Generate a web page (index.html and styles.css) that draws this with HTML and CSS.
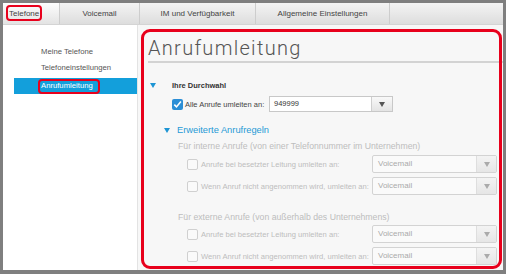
FILE: index.html
```html
<!DOCTYPE html>
<html lang="de">
<head>
<meta charset="utf-8">
<title>Anrufumleitung</title>
<link rel="stylesheet" href="styles.css">
</head>
<body>
<div class="frame">
  <div class="window">
    <nav class="tabs">
      <div class="tab tab-active">Telefone</div>
      <div class="tab tab-vm">Voicemail</div>
      <div class="tab tab-im">IM und Verfügbarkeit</div>
      <div class="tab tab-gen">Allgemeine Einstellungen</div>
      <div class="tab-fill"></div>
    </nav>
    <div class="main">
      <aside class="sidebar">
        <div class="nav-item">Meine Telefone</div>
        <div class="nav-item">Telefoneinstellungen</div>
        <div class="nav-item selected">Anrufumleitung</div>
      </aside>
      <section class="content">
        <h1 class="title">Anrufumleitung</h1>
        <div class="sec-head">
          <svg class="tri" width="6" height="5" viewBox="0 0 6 5"><path d="M0 0H6L3 5Z" fill="#1e95d4"/></svg>
          <span class="sec-text">Ihre Durchwahl</span>
        </div>
        <div class="fwd-row">
          <span class="cb cb-on"><svg width="11" height="11" viewBox="0 0 11 11"><path d="M2.3 5.6L4.5 7.9L8.9 2.6" fill="none" stroke="#fff" stroke-width="1.6"/></svg></span>
          <span class="fwd-lbl">Alle Anrufe umleiten an:</span>
          <div class="combo">
            <span class="combo-val">949999</span>
            <span class="combo-btn"><svg width="6" height="5" viewBox="0 0 6 5"><path d="M0 0H6L3 5Z" fill="#555"/></svg></span>
          </div>
        </div>
        <div class="adv-head">
          <svg class="tri" width="6" height="5" viewBox="0 0 6 5"><path d="M0 0H6L3 5Z" fill="#1e95d4"/></svg>
          <span class="adv-text">Erweiterte Anrufregeln</span>
        </div>
        <div class="group-label">Für interne Anrufe (von einer Telefonnummer im Unternehmen)</div>
        <div class="rule-row">
          <span class="cb"></span>
          <span class="rule-lbl">Anrufe bei besetzter Leitung umleiten an:</span>
          <div class="select"><span class="sel-val">Voicemail</span><span class="sel-btn"><svg width="6" height="5" viewBox="0 0 6 5"><path d="M0 0H6L3 5Z" fill="#aaa"/></svg></span></div>
        </div>
        <div class="rule-row rule-next">
          <span class="cb"></span>
          <span class="rule-lbl">Wenn Anruf nicht angenommen wird, umleiten an:</span>
          <div class="select"><span class="sel-val">Voicemail</span><span class="sel-btn"><svg width="6" height="5" viewBox="0 0 6 5"><path d="M0 0H6L3 5Z" fill="#aaa"/></svg></span></div>
        </div>
        <div class="group-label group-ext">Für externe Anrufe (von außerhalb des Unternehmens)</div>
        <div class="rule-row rule-first-ext">
          <span class="cb"></span>
          <span class="rule-lbl">Anrufe bei besetzter Leitung umleiten an:</span>
          <div class="select"><span class="sel-val">Voicemail</span><span class="sel-btn"><svg width="6" height="5" viewBox="0 0 6 5"><path d="M0 0H6L3 5Z" fill="#aaa"/></svg></span></div>
        </div>
        <div class="rule-row rule-next">
          <span class="cb"></span>
          <span class="rule-lbl">Wenn Anruf nicht angenommen wird, umleiten an:</span>
          <div class="select"><span class="sel-val">Voicemail</span><span class="sel-btn"><svg width="6" height="5" viewBox="0 0 6 5"><path d="M0 0H6L3 5Z" fill="#aaa"/></svg></span></div>
        </div>
      </section>
    </div>
    <div class="mark mark-tab"></div>
    <div class="mark mark-nav"></div>
    <div class="mark mark-main"></div>
  </div>
</div>
</body>
</html>
```
FILE: styles.css
```css
html, body {
  margin: 0;
  padding: 0;
}

.frame {
  width: 506px;
  height: 274px;
  box-sizing: border-box;
  padding: 3px 3px 4px 3px;
  background: #7f7f7f;
}

.window {
  position: relative;
  height: 267px;
  background: #fff;
  display: flex;
  flex-direction: column;
  overflow: hidden;
  font-family: "Liberation Sans", Arial, sans-serif;
  font-size: 8px;
  color: #444;
}

/* Tabs */
.tabs {
  flex: none;
  height: 22px;
  display: flex;
  box-sizing: border-box;
  border-bottom: 1px solid #d4d4d4;
}

.tab {
  display: flex;
  align-items: center;
  justify-content: center;
  box-sizing: border-box;
  color: #444;
  background: linear-gradient(#f4f4f4, #dddddd);
  border-right: 1px solid #cdcdcd;
}

.tab-active {
  width: 57px;
  justify-content: flex-start;
  padding-left: 6px;
  background: linear-gradient(#fdfdfd, #e3e3e3);
}

.tab-vm { width: 80px; }
.tab-im { width: 116px; }
.tab-gen { width: 134px; }

.tab-fill {
  flex: 1;
  background: linear-gradient(#f4f4f4, #dddddd);
}

/* Main */
.main {
  flex: 1;
  display: flex;
  min-height: 0;
}

.sidebar {
  flex: none;
  width: 135px;
  box-sizing: border-box;
  border-right: 1px solid #e3e3e3;
  padding: 19px 0 0 11px;
  background: #fff;
  font-size: 7.7px;
}

.nav-item {
  height: 16px;
  line-height: 16px;
  padding-left: 27px;
  color: #555;
}

.nav-item.selected {
  margin-top: 2px;
  background: #139fdb;
  color: #fff;
}

.content {
  flex: 1;
  background: #f7f7f7;
  display: flex;
  flex-direction: column;
}

.title {
  margin: 0 0 0 10px;
  padding: 11px 0 1px;
  line-height: 24px;
  font-family: Roboto, "Liberation Sans", sans-serif;
  font-weight: 300;
  font-size: 20px;
  letter-spacing: 1.3px;
  color: #555;
  border-bottom: 2px solid #d3d3d3;
}

.tri {
  flex: none;
  display: block;
}

.sec-head {
  margin-top: 15px;
  height: 14px;
  display: flex;
  align-items: center;
  padding-left: 12px;
}

.sec-text {
  margin-left: 16px;
  font-weight: bold;
  font-size: 7.5px;
  color: #333;
}

.fwd-row {
  margin-top: 4px;
  height: 16px;
  display: flex;
  align-items: center;
  padding-left: 34px;
  font-size: 7.5px;
  color: #444;
}

.cb {
  flex: none;
  width: 11px;
  height: 11px;
  box-sizing: border-box;
  border: 1px solid #d0d0d0;
  border-radius: 2px;
  background: #fafafa;
}

.cb-on {
  border: none;
  background: #2b8ed6;
}

.cb-on svg {
  display: block;
}

.fwd-lbl {
  margin-left: 2px;
  width: 84px;
  flex: none;
}

.combo {
  width: 124px;
  height: 16px;
  box-sizing: border-box;
  border: 1px solid #c8c8c8;
  background: #fff;
  display: flex;
  align-items: stretch;
}

.combo-val {
  flex: 1;
  padding-left: 4px;
  line-height: 14px;
  color: #333;
}

.combo-btn {
  width: 20px;
  flex: none;
  border-left: 1px solid #cfcfcf;
  background: linear-gradient(#f9f9f9, #e4e4e4);
  display: flex;
  align-items: center;
  justify-content: center;
}

.adv-head {
  margin-top: 11px;
  height: 14px;
  display: flex;
  align-items: center;
  padding-left: 26px;
}

.adv-text {
  margin-left: 7px;
  font-size: 9.3px;
  color: #1f9ad6;
}

.group-label {
  margin-top: 3px;
  height: 12px;
  line-height: 12px;
  padding-left: 40px;
  font-size: 8.7px;
  color: #bdbdbd;
}

.group-ext {
  margin-top: 16px;
}

.rule-row {
  margin-top: 3px;
  height: 18px;
  display: flex;
  align-items: center;
  padding-left: 49px;
  font-size: 7.6px;
  color: #bdbdbd;
}

.rule-next {
  margin-top: 4px;
}

.rule-first-ext {
  margin-top: 2px;
}

.rule-lbl {
  flex: none;
  width: 171px;
  margin-left: 3px;
}

.select {
  width: 125px;
  height: 18px;
  box-sizing: border-box;
  border: 1px solid #d3d3d3;
  border-radius: 2px;
  background: #fafafa;
  display: flex;
  align-items: stretch;
}

.sel-val {
  flex: 1;
  padding-left: 5px;
  line-height: 16px;
  font-size: 8px;
  color: #aaa;
}

.sel-btn {
  width: 19px;
  flex: none;
  border-left: 1px solid #dedede;
  background: linear-gradient(#f3f3f3, #e6e6e6);
  display: flex;
  align-items: center;
  justify-content: center;
}

/* Red annotation marks */
.mark {
  position: absolute;
  box-sizing: border-box;
  border: 2px solid #e8001c;
  pointer-events: none;
}

.mark-tab {
  left: 3px;
  top: 2px;
  width: 36px;
  height: 16px;
  border-radius: 4px;
}

.mark-nav {
  left: 35px;
  top: 76px;
  width: 62px;
  height: 15px;
  border-radius: 4px;
}

.mark-main {
  left: 138px;
  top: 26px;
  width: 361px;
  height: 240px;
  border-width: 3px;
  border-radius: 9px;
}
```
